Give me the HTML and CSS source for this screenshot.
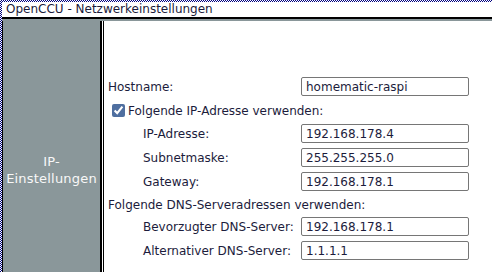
FILE: index.html
```html
<!DOCTYPE html>
<html lang="de">
<head>
    <meta charset="UTF-8">
    <meta name="viewport" content="width=device-width, initial-scale=1.0">
    <title>OpenCCU - Netzwerkeinstellungen</title>
    <link rel="stylesheet" href="styles.css">
</head>
<body>
    <div class="window">
        <div class="title-bar">OpenCCU - Netzwerkeinstellungen</div>

        <div class="dialog">
            <!-- Section caption on the left -->
            <div class="side-panel">
                <div class="side-title">IP-<br>Einstellungen</div>
            </div>

            <!-- Network settings form -->
            <div class="content">
                <table class="net-form">
                    <colgroup>
                        <col class="col-label">
                        <col>
                    </colgroup>
                    <tr class="row-input">
                        <td class="label">Hostname:</td>
                        <td><input type="text" class="text-field" value="homematic-raspi"></td>
                    </tr>
                    <tr class="row-check">
                        <td colspan="2" class="label"><label><input type="checkbox" class="check" checked>Folgende IP-Adresse verwenden:</label></td>
                    </tr>
                    <tr class="row-input">
                        <td class="label sub">IP-Adresse:</td>
                        <td><input type="text" class="text-field" value="192.168.178.4"></td>
                    </tr>
                    <tr class="row-input">
                        <td class="label sub">Subnetmaske:</td>
                        <td><input type="text" class="text-field" value="255.255.255.0"></td>
                    </tr>
                    <tr class="row-input">
                        <td class="label sub">Gateway:</td>
                        <td><input type="text" class="text-field" value="192.168.178.1"></td>
                    </tr>
                    <tr class="row-heading">
                        <td colspan="2" class="label">Folgende DNS-Serveradressen verwenden:</td>
                    </tr>
                    <tr class="row-input">
                        <td class="label sub">Bevorzugter DNS-Server:</td>
                        <td><input type="text" class="text-field" value="192.168.178.1"></td>
                    </tr>
                    <tr class="row-input">
                        <td class="label sub">Alternativer DNS-Server:</td>
                        <td><input type="text" class="text-field" value="1.1.1.1"></td>
                    </tr>
                </table>
            </div>
        </div>
    </div>
</body>
</html>
```

FILE: styles.css
```css
/* Styles for the network settings dialog */
body {
    margin: 0;
    height: 100vh;
    overflow: hidden;
    font-family: "DejaVu Sans", Verdana, sans-serif;
    font-size: 12px;
    color: #1c1c3c;
    /* dotted focus frame round the window */
    background: repeating-conic-gradient(#000080 0 25%, #fff 0 50%) 0 0 / 2px 2px;
}

.window {
    margin: 2px 0 0 2px;
    height: calc(100vh - 2px);
    background-color: #fff;
    display: flex;
    flex-direction: column;
}

.title-bar {
    height: 15px;
    line-height: 15px;
    padding-left: 4px;
    white-space: nowrap;
    border-bottom: 2px solid #000;
}

.dialog {
    flex: 1;
    display: flex;
    border-top: 2px solid #8a979a;
}

.side-panel {
    width: 97px;
    flex-shrink: 0;
    background-color: #8a979a;
    border-left: 1px solid #000;
    border-right: 2px solid #000;
    padding-top: 132px;
}

.side-title {
    color: #f8f8f8;
    font-size: 13px;
    line-height: 17px;
    letter-spacing: 0.2px;
    text-align: center;
}

.content {
    flex: 1;
    min-width: 0;
    overflow: hidden;
    margin-left: 1px;
    border-left: 1px solid #000;
    padding: 54px 0 0 4px;
}

.net-form {
    border-collapse: collapse;
    border-spacing: 0;
    table-layout: fixed;
}

.net-form .col-label {
    width: 193px;
}

.net-form td {
    padding: 0;
    vertical-align: middle;
    white-space: nowrap;
}

.net-form .label.sub {
    padding-left: 35px;
}

.row-input td {
    padding: 2px 0 3px;
}

.row-check td {
    height: 23px;
}

.row-heading td {
    height: 21px;
}

.text-field {
    display: block;
    box-sizing: border-box;
    width: 168px;
    height: 19px;
    margin: 0;
    padding: 0 0 0 4px;
    border: 1px solid #767676;
    border-radius: 2px;
    font: inherit;
    color: #1c1c3c;
    background-color: #fff;
}

.check {
    margin: 0 3px 0 4px;
    width: 13px;
    height: 13px;
    vertical-align: -2px;
    accent-color: #4f6fa0;
}
```
